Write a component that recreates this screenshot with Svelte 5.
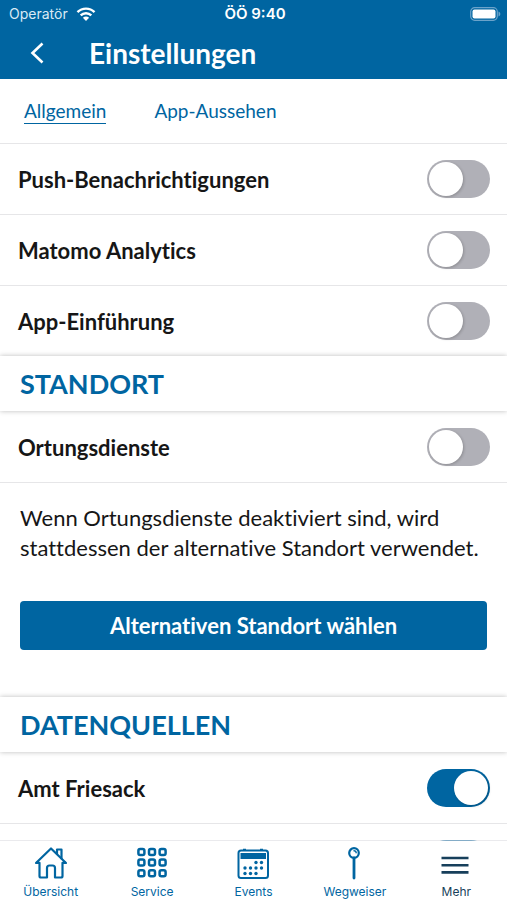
<script>
  let general = $state([
    { id: 'push', label: 'Push-Benachrichtigungen', on: false },
    { id: 'matomo', label: 'Matomo Analytics', on: false },
    { id: 'intro', label: 'App-Einführung', on: false }
  ]);
  let location = $state([{ id: 'location', label: 'Ortungsdienste', on: false }]);
  let sources = $state([
    { id: 'friesack', label: 'Amt Friesack', on: true },
    { id: 'more', label: '', on: true }
  ]);
  const dots = [0, 1, 2];
</script>

{#snippet rows(items)}
  <div class="rows">
    {#each items as item (item.id)}
      <div class="row">
        <label for={item.id}>{item.label}</label>
        <input id={item.id} class="switch" type="checkbox" role="switch" bind:checked={item.on} />
      </div>
    {/each}
  </div>
{/snippet}

<div class="app">
  <header>
    <div class="status">
      <div class="carrier">
        <span>Operatör</span>
        <svg width="20" height="14" viewBox="0 0 20 14" aria-hidden="true">
          <g fill="none" stroke="#fff" stroke-width="2.4">
            <path d="M1.5 5.2C6.2.4 13.8.4 18.5 5.2" />
            <path d="M4.7 8.4C7.6 5.5 12.4 5.5 15.3 8.4" />
          </g>
          <path d="M10 14 6.9 10.7C8.7 9.1 11.3 9.1 13.1 10.7Z" fill="#fff" />
        </svg>
      </div>
      <span class="time">ÖÖ 9:40</span>
      <svg class="battery" width="31" height="14" viewBox="0 0 31 14" aria-hidden="true">
        <rect x=".7" y=".7" width="26.6" height="12.6" rx="4" fill="none" stroke="#6ba3ca" stroke-width="1.2" />
        <rect x="2.5" y="2.5" width="23" height="9" rx="2" fill="#fff" />
        <path d="M28.500 4.500c2.400 1 2.400 4 0 5z" fill="#6ba3ca" />
      </svg>
    </div>
    <div class="title">
      <button class="back" aria-label="Zurück">
        <svg width="14" height="22" viewBox="0 0 14 22" aria-hidden="true">
          <path d="M12.5 1.500 2.500 11l10 9.500" fill="none" stroke="#fff" stroke-width="2.600" />
        </svg>
      </button>
      <h1>Einstellungen</h1>
    </div>
  </header>

  <main>
    <nav class="tabs">
      <a href="#allgemein" class="current" aria-current="page">Allgemein</a>
      <a href="#aussehen">App-Aussehen</a>
    </nav>
    {@render rows(general)}
    <h2>STANDORT</h2>
    {@render rows(location)}
    <section class="alternative">
      <p>Wenn Ortungsdienste deaktiviert sind, wird stattdessen der alternative Standort verwendet.</p>
      <button class="choose">Alternativen Standort wählen</button>
    </section>
    <h2>DATENQUELLEN</h2>
    {@render rows(sources)}
  </main>

  <nav class="bottom">
    <a href="#uebersicht">
      <svg width="34" height="34" viewBox="0 0 34 34" aria-hidden="true">
        <g fill="none" stroke="currentColor" stroke-width="2.200" stroke-linejoin="round" stroke-linecap="round">
          <path d="M5.5 16.8 2 17 17 2.5 32 17l-3.5-.2V30q0 1.5-1.5 1.5h-6V22q0-2.5-2.500-2.500h-3Q13 19.500 13 22v9.500H7Q5.500 31.500 5.500 30Z" />
          <path d="M23 8V3.500h4.500v9" />
        </g>
      </svg>
      <span>Übersicht</span>
    </a>
    <a href="#service">
      <svg width="34" height="34" viewBox="0 0 34 34" aria-hidden="true">
        <g fill="none" stroke="currentColor" stroke-width="2.500">
          {#each dots as y}
            {#each dots as x}
              <rect x={3.4 + x * 10.6} y={3 + y * 10.6} width="6" height="6" rx="1.8" />
            {/each}
          {/each}
        </g>
      </svg>
      <span>Service</span>
    </a>
    <a href="#events">
      <svg width="34" height="34" viewBox="0 0 34 34" aria-hidden="true">
        <rect x="2.500" y="4.500" width="29.500" height="27.500" rx="2.500" fill="none" stroke="currentColor" stroke-width="2" />
        <path d="M4.500 7h25.500V13h-25.500zM7 2.800h3v2H7zM24 2.800h3v2h-3z" fill="currentColor" />
        <g fill="currentColor">
          {#each [20, 25.5] as x}<circle cx={x} cy="16.500" r="1.700" />{/each}
          {#each [9, 14.5, 20, 25.5] as x}<circle cx={x} cy="22" r="1.700" />{/each}
          {#each [9, 14.5, 20] as x}<circle cx={x} cy="27.500" r="1.700" />{/each}
        </g>
      </svg>
      <span>Events</span>
    </a>
    <a href="#wegweiser">
      <svg width="34" height="34" viewBox="0 0 34 34" aria-hidden="true">
        <circle cx="16" cy="7" r="4.800" fill="none" stroke="currentColor" stroke-width="2.200" />
        <path d="M16 12v20" stroke="currentColor" stroke-width="2.800" stroke-linecap="round" />
        <path d="M15.500 4.700q2.700-.2 2.700 2.500" fill="none" stroke="currentColor" stroke-width="1.500" />
      </svg>
      <span>Wegweiser</span>
    </a>
    <a href="#mehr" class="active" aria-current="page">
      <svg width="34" height="34" viewBox="0 0 34 34" aria-hidden="true">
        <path d="M2.500 12h27M2.500 19.200h27M2.500 26.400h27" stroke="currentColor" stroke-width="2.600" />
      </svg>
      <span>Mehr</span>
    </a>
  </nav>
</div>

<style>
  :global(body) { margin: 0; }
  .app {
    height: 100vh;
    display: flex;
    flex-direction: column;
    background: #fff;
    color: #161616;
    font-family: Lato, sans-serif;
    font-variant-ligatures: none;
  }
  button { font: inherit; font-variant-ligatures: none; border: 0; cursor: pointer; }
  a { text-decoration: none; color: #0065a1; }
  svg { display: block; flex: none; }

  header { flex: none; background: #0065a1; color: #fff; }
  .status {
    display: grid;
    grid-template-columns: 1fr auto 1fr;
    align-items: center;
    height: 27px;
    padding: 0 6px 0 9px;
    font: 14px/20px Inter, sans-serif;
  }
  .carrier { display: flex; align-items: center; gap: 8px; color: #d9eaf5; }
  .time { font-size: 15px; font-weight: 600; }
  .battery { justify-self: end; }
  .title { display: flex; align-items: center; height: 52px; }
  .back {
    display: flex;
    justify-content: center;
    width: 74px;
    padding: 0;
    background: none;
  }
  h1 { margin: 0 0 0 15px; font-size: 28px; line-height: 36px; font-weight: 700; }

  main { flex: 1; min-height: 0; overflow-y: auto; scrollbar-width: none; }
  .tabs {
    display: flex;
    align-items: center;
    gap: 48px;
    height: 64px;
    padding: 0 24px;
    font-size: 19px;
    line-height: 24px;
  }
  .tabs a { border-bottom: 1px solid transparent; }
  .tabs .current { border-color: #0065a1; }

  .row {
    display: flex;
    align-items: center;
    justify-content: space-between;
    box-sizing: border-box;
    height: 71px;
    padding: 0 17px 0 18px;
    border-top: 1px solid #e6e6e8;
    font-size: 22px;
    line-height: 28px;
    font-weight: 700;
  }
  .row label { padding-top: 2px; }
  h2 + .rows .row:first-child { border-color: transparent; }
  .switch {
    appearance: none;
    display: flex;
    box-sizing: border-box;
    width: 63px;
    height: 38px;
    margin: 0;
    padding: 2px;
    border-radius: 19px;
    background: #b0b0b7;
  }
  .switch::before {
    content: '';
    width: 34px;
    height: 34px;
    border-radius: 50%;
    background: #fff;
    box-shadow: 1px 1px 3px #0003;
  }
  .switch:checked { justify-content: flex-end; background: #0065a1; }

  h2 {
    position: relative;
    margin: 0;
    padding: 10px 20px;
    background: #fff;
    box-shadow: 0 0 5px #0004;
    color: #0065a1;
    font-size: 27px;
    line-height: 35px;
    font-weight: 700;
  }
  .alternative {
    padding: 20px 20px 47px;
    border-top: 1px solid #e6e6e8;
  }
  p { margin: 0; font-size: 22px; line-height: 30px; }
  .choose {
    width: 100%;
    margin-top: 38px;
    padding: 10px;
    border-radius: 4px;
    background: #0065a1;
    color: #fff;
    font-size: 22px;
    line-height: 29px;
    font-weight: 700;
  }

  .bottom {
    position: relative;
    flex: none;
    display: grid;
    grid-template-columns: repeat(5, 1fr);
    box-sizing: border-box;
    height: 60px;
    margin-top: -1px;
    padding-top: 5px;
    border-top: 1px solid #dcdce199;
    background: #fff;
    background-clip: padding-box;
    font: 12px/16px Inter, sans-serif;
  }
  .bottom a { display: flex; flex-direction: column; align-items: center; gap: 4px; }
  .bottom .active { color: #173f5b; }
</style>
